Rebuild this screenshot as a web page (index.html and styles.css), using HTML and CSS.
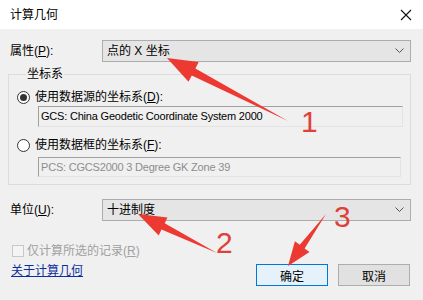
FILE: index.html
```
<!DOCTYPE html>
<html lang="zh-CN">
<head>
    <meta charset="UTF-8">
    <title>计算几何</title>
    <link rel="stylesheet" href="styles.css">
</head>
<body>

    <!-- Title bar -->
    <div class="titlebar">
        <span class="title">计算几何</span>
        <svg class="close" width="12" height="12" viewBox="0 0 12 12">
            <path d="M1 1 L11 11 M11 1 L1 11" stroke="#111" stroke-width="1.1" fill="none"/>
        </svg>
    </div>

    <!-- Dialog content -->
    <div class="content">
        <div class="row">
            <label class="row-label">属性(<u>P</u>):</label>
            <div class="combo">
                <span>点的 X 坐标</span>
                <svg width="9" height="6" viewBox="0 0 9 6"><path d="M0.5 0.5 L4.5 4.5 L8.5 0.5" stroke="#555" fill="none"/></svg>
            </div>
        </div>

        <fieldset class="group">
            <legend>坐标系</legend>
            <div class="radio-row">
                <span class="radio checked"></span>
                <span>使用数据源的坐标系(<u>D</u>):</span>
            </div>
            <div class="textbox first">GCS: China Geodetic Coordinate System 2000</div>
            <div class="radio-row second">
                <span class="radio"></span>
                <span>使用数据框的坐标系(<u>F</u>):</span>
            </div>
            <div class="textbox disabled">PCS: CGCS2000 3 Degree GK Zone 39</div>
        </fieldset>

        <div class="row units">
            <label class="row-label">单位(<u>U</u>):</label>
            <div class="combo">
                <span>十进制度</span>
                <svg width="9" height="6" viewBox="0 0 9 6"><path d="M0.5 0.5 L4.5 4.5 L8.5 0.5" stroke="#555" fill="none"/></svg>
            </div>
        </div>

        <div class="footer">
            <div class="footer-left">
                <div class="check-row">
                    <span class="checkbox"></span>
                    <span>仅计算所选的记录(<u>R</u>)</span>
                </div>
                <a class="about" href="#">关于计算几何</a>
            </div>
            <div class="buttons">
                <button class="btn default">确定</button>
                <button class="btn">取消</button>
            </div>
        </div>
    </div>

    <!-- Annotation arrows drawn over the dialog -->
    <svg class="marks" width="423" height="300" viewBox="0 0 423 300">
        <polygon fill="#ec3a33" points="167,58 198.7,62.1 195.4,68.4 288,121 191.8,75.4 188.5,81.7"/>
        <polygon fill="#ec3a33" points="138,214 167.5,217.4 164.7,223.3 217,253 161.5,229.5 158.7,235.4"/>
        <polygon fill="#ec3a33" points="288,266 309.5,251.9 304.6,248.4 326,214 299.8,244.8 294.9,241.3"/>
        <text x="301" y="132" class="num">1</text>
        <text x="216" y="253" class="num">2</text>
        <text x="334" y="227" class="num">3</text>
    </svg>

</body>
</html>
```

FILE: styles.css
```
/* Reset */
* {
    margin: 0;
    padding: 0;
    box-sizing: border-box;
}

body {
    font-family: "Liberation Sans", "Noto Sans CJK SC", sans-serif;
    font-size: 12px;
    line-height: 16px;
    color: #000;
    background-color: #f0f0f0;
    width: 423px;
    height: 300px;
    overflow: hidden;
    position: relative;
}

u {
    text-decoration: underline;
}

/* Title bar */
.titlebar {
    height: 29px;
    background-color: #fff;
    display: flex;
    align-items: center;
    justify-content: space-between;
    padding: 0 11px 0 10px;
}

/* Content */
.content {
    padding: 11px 12px 0 8px;
}

.row {
    display: flex;
    align-items: center;
    height: 22px;
}

.row-label {
    width: 94px;
    padding-left: 2px;
}

.combo {
    width: 309px;
    height: 22px;
    border: 1px solid #adadad;
    background-color: #e5e5e5;
    display: flex;
    align-items: center;
    justify-content: space-between;
    padding: 0 6px 0 4px;
}

/* Group box */
.group {
    margin-top: 4px;
    border: 1px solid #dcdcdc;
    padding: 7px 0 7px 8px;
}

.group legend {
    margin-left: 9px;
    padding: 0 1px;
    line-height: 16px;
}

.radio-row {
    display: flex;
    align-items: center;
    height: 16px;
    gap: 5px;
}

.radio-row.second {
    margin-top: 10px;
}

.radio {
    width: 13px;
    height: 13px;
    border: 1px solid #333;
    border-radius: 50%;
    background-color: #fff;
    display: flex;
    align-items: center;
    justify-content: center;
}

.radio.checked::after {
    content: "";
    width: 7px;
    height: 7px;
    border-radius: 50%;
    background-color: #333;
}

.textbox {
    margin-left: 21px;
    width: 365px;
    height: 21px;
    border: 1px solid #e3e3e3;
    border-top-color: #a0a0a0;
    border-left-color: #a0a0a0;
    padding: 0 2px;
    font-size: 11px;
    letter-spacing: -0.2px;
    line-height: 19px;
    white-space: nowrap;
}

.textbox.first {
    margin-top: 1px;
}

.textbox.disabled {
    margin-top: 4px;
    height: 20px;
    width: 363px;
    color: #8d8d8d;
}

.units {
    margin-top: 14px;
}

/* Footer */
.footer {
    margin-top: 23px;
    height: 42px;
    display: flex;
    justify-content: space-between;
}

.footer-left {
    display: flex;
    flex-direction: column;
    padding-left: 4px;
}

.check-row {
    display: flex;
    align-items: center;
    height: 14px;
    gap: 3px;
    color: #a0a0a0;
}

.checkbox {
    width: 12px;
    height: 12px;
    border: 1px solid #c8c8c8;
    background-color: #f4f4f4;
}

.about {
    margin-top: 5px;
    margin-left: -1px;
    color: #0b2e9e;
    text-decoration: underline;
}

.buttons {
    display: flex;
    align-items: flex-end;
    gap: 10px;
    padding-right: 1px;
}

.btn {
    width: 72px;
    height: 22px;
    font-family: inherit;
    font-size: 12px;
    background-color: #e1e1e1;
    border: 1px solid #adadad;
}

.btn.default {
    background-color: #e5f1fb;
    border-color: #0078d7;
}

/* Annotations */
.marks {
    position: absolute;
    top: 0;
    left: 0;
    pointer-events: none;
}

.num {
    font-family: "Liberation Sans", sans-serif;
    font-size: 30px;
    fill: #e0403a;
}
```
